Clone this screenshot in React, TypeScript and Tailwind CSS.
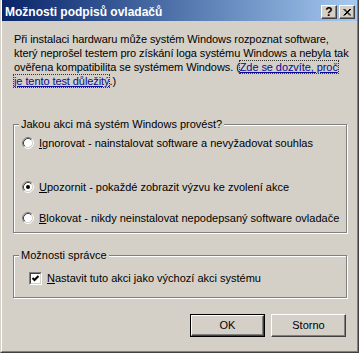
import React from "react";

function Radio({ checked }: { checked?: boolean }) {
  return (
    <svg width="12" height="12" viewBox="0 0 12 12" className="shrink-0">
      <circle cx="6" cy="6" r="4.5" fill="#fff" />
      <path d="M9.89 2.11A5.5 5.5 0 0 0 2.11 9.89" fill="none" stroke="#808080" />
      <path d="M2.11 9.89A5.5 5.5 0 0 0 9.89 2.11" fill="none" stroke="#fff" />
      <path d="M9.18 2.82A4.5 4.5 0 0 0 2.82 9.18" fill="none" stroke="#404040" />
      <path d="M2.82 9.18A4.5 4.5 0 0 0 9.18 2.82" fill="none" stroke="#d4d0c8" />
      {checked && <circle cx="6" cy="6" r="2" fill="#000" />}
    </svg>
  );
}

function Checkbox() {
  return (
    <span className="w-[13px] h-[13px] shrink-0 border-t border-l border-t-[#808080] border-l-[#808080] border-b border-r border-b-white border-r-white">
      <span className="block w-full h-full bg-white border-t border-l border-t-[#404040] border-l-[#404040] border-b border-r border-b-[#d4d0c8] border-r-[#d4d0c8]">
        <svg width="9" height="9" viewBox="0 0 9 9" className="block">
          <path d="M1.5 4 L3.5 6 L7.5 2" fill="none" stroke="#000" strokeWidth="2" />
        </svg>
      </span>
    </span>
  );
}

function CaptionButton({ children }: { children: React.ReactNode }) {
  return (
    <div className="w-[16px] h-[14px] bg-[#d4d0c8] border-t border-l border-t-white border-l-white border-b border-r border-b-[#404040] border-r-[#404040] shadow-[inset_-1px_-1px_0_#808080] flex items-center justify-center">
      {children}
    </div>
  );
}

function Button({ label, primary }: { label: string; primary?: boolean }) {
  const inner = (
    <div className="w-full h-full flex items-center justify-center border-t border-l border-t-white border-l-white border-b border-r border-b-[#404040] border-r-[#404040] shadow-[inset_-1px_-1px_0_#808080]">
      {label}
    </div>
  );
  return primary ? (
    <div className="w-[75px] h-[23px] border border-black">{inner}</div>
  ) : (
    <div className="w-[75px] h-[23px]">{inner}</div>
  );
}

const link = "text-[#0a0a9a] underline outline outline-1 outline-dotted outline-[#333]";

export default function App() {
  return (
    <div className="w-[359px] h-[353px] flex flex-col bg-[#d4d0c8] border-l border-l-[#d4d0c8] border-r border-r-[#404040] border-b border-b-[#404040] font-['Liberation_Sans',Arial,sans-serif] text-[11px] text-black">
      <div className="flex-1 flex flex-col border-l border-l-white border-r border-r-[#808080] border-b border-b-[#808080]">
        <div className="h-[21px] flex bg-gradient-to-r from-[#0a246a] to-[#a6caf0] pl-[3px] pr-[2px]">
          <span className="self-center mt-[2px] font-bold text-white text-[12px]">Možnosti podpisů ovladačů</span>
          <div className="ml-auto mt-[5px] flex gap-[2px]">
            <CaptionButton>
              <span className="font-bold text-[12px] leading-none">?</span>
            </CaptionButton>
            <CaptionButton>
              <svg width="8" height="7" viewBox="0 0 8 7">
                <path d="M0.5 0 L7 6.5 M1.5 0 L8 6.5 M7 0 L0.5 6.5 M8 0 L1.5 6.5" stroke="#000" strokeWidth="1" />
              </svg>
            </CaptionButton>
          </div>
        </div>

        <p className="mt-[11px] pl-[12px] leading-[14px] whitespace-nowrap tracking-[-0.08px]">
          Při instalaci hardwaru může systém Windows rozpoznat software,
          <br />
          který neprošel testem pro získání loga systému Windows a nebyla tak
          <br />
          ověřena kompatibilita se systémem Windows. (<span className={link}>Zde se dozvíte, proč</span>
          <br />
          <span className={link}>je tento test důležitý</span>.)
        </p>

        <fieldset className="ml-[11px] mt-[29px] w-[334px] border border-[#808080] shadow-[inset_1px_1px_0_#fff,1px_1px_0_#fff] pb-[7px]">
          <legend className="ml-[5px] px-[2px] leading-[14px] bg-[#d4d0c8]">Jakou akci má systém Windows provést?</legend>
          <div className="flex flex-col pl-[8px] pt-[5px]">
            <div className="h-[14px] flex items-center gap-[5px]">
              <Radio />
              <span>
                <u>I</u>gnorovat - nainstalovat software a nevyžadovat souhlas
              </span>
            </div>
            <div className="h-[14px] mt-[30px] flex items-center gap-[5px]">
              <Radio checked />
              <span>
                <u>U</u>pozornit - pokaždé zobrazit výzvu ke zvolení akce
              </span>
            </div>
            <div className="h-[14px] mt-[17px] flex items-center gap-[5px]">
              <Radio />
              <span>
                <u>B</u>lokovat - nikdy neinstalovat nepodepsaný software ovladače
              </span>
            </div>
          </div>
        </fieldset>

        <fieldset className="ml-[11px] mt-[15px] w-[334px] border border-[#808080] shadow-[inset_1px_1px_0_#fff,1px_1px_0_#fff] pb-[12px]">
          <legend className="ml-[5px] px-[2px] leading-[14px] bg-[#d4d0c8]">Možnosti správce</legend>
          <div className="pl-[15px] pt-[9px]">
            <div className="h-[14px] flex items-center gap-[5px]">
              <Checkbox />
              <span>
                <u>N</u>astavit tuto akci jako výchozí akci systému
              </span>
            </div>
          </div>
        </fieldset>

        <div className="mt-[16px] pr-[11px] flex justify-end gap-[6px]">
          <Button label="OK" primary />
          <Button label="Storno" />
        </div>
      </div>
    </div>
  );
}
